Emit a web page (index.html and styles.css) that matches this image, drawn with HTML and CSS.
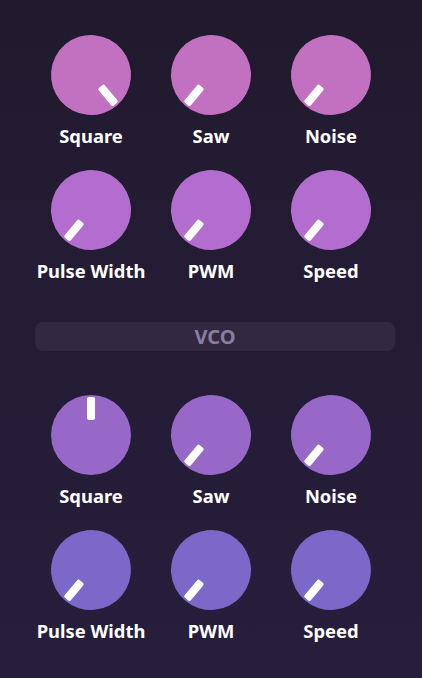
FILE: index.html
```html
<!DOCTYPE html>
<html lang="en">
<head>
    <meta charset="UTF-8">
    <meta name="viewport" content="width=device-width, initial-scale=1.0">
    <title>Synth Panel</title>
    <link rel="stylesheet" href="styles.css">
</head>
<body>
    <div class="panel">
        <!-- Oscillator mix -->
        <div class="knob-grid">
            <div class="control">
                <div class="knob row-1" style="transform: rotate(140deg)"><span class="pointer"></span></div>
                <div class="label">Square</div>
            </div>
            <div class="control">
                <div class="knob row-1" style="transform: rotate(-140deg)"><span class="pointer"></span></div>
                <div class="label">Saw</div>
            </div>
            <div class="control">
                <div class="knob row-1" style="transform: rotate(-140deg)"><span class="pointer"></span></div>
                <div class="label">Noise</div>
            </div>
            <div class="control">
                <div class="knob row-2" style="transform: rotate(-140deg)"><span class="pointer"></span></div>
                <div class="label">Pulse Width</div>
            </div>
            <div class="control">
                <div class="knob row-2" style="transform: rotate(-140deg)"><span class="pointer"></span></div>
                <div class="label">PWM</div>
            </div>
            <div class="control">
                <div class="knob row-2" style="transform: rotate(-140deg)"><span class="pointer"></span></div>
                <div class="label">Speed</div>
            </div>
        </div>

        <div class="section-title">VCO</div>

        <div class="knob-grid">
            <div class="control">
                <div class="knob row-3" style="transform: rotate(0deg)"><span class="pointer"></span></div>
                <div class="label">Square</div>
            </div>
            <div class="control">
                <div class="knob row-3" style="transform: rotate(-140deg)"><span class="pointer"></span></div>
                <div class="label">Saw</div>
            </div>
            <div class="control">
                <div class="knob row-3" style="transform: rotate(-140deg)"><span class="pointer"></span></div>
                <div class="label">Noise</div>
            </div>
            <div class="control">
                <div class="knob row-4" style="transform: rotate(-140deg)"><span class="pointer"></span></div>
                <div class="label">Pulse Width</div>
            </div>
            <div class="control">
                <div class="knob row-4" style="transform: rotate(-140deg)"><span class="pointer"></span></div>
                <div class="label">PWM</div>
            </div>
            <div class="control">
                <div class="knob row-4" style="transform: rotate(-140deg)"><span class="pointer"></span></div>
                <div class="label">Speed</div>
            </div>
        </div>
    </div>
</body>
</html>
```

FILE: styles.css
```css
html {
    background: #231b31;
}

body {
    font-family: 'Noto Sans', sans-serif;
    margin: 0;
    padding: 0;
    min-height: 678px;
    background: linear-gradient(180deg, #211a2e 0%, #271e3c 100%);
    color: #ffffff;
}

.panel {
    padding-top: 35px;
}

.knob-grid {
    display: grid;
    grid-template-columns: repeat(3, 120px);
    justify-content: center;
    row-gap: 22px;
}

.control {
    display: flex;
    flex-direction: column;
    align-items: center;
}

.knob {
    position: relative;
    width: 80px;
    height: 80px;
    border-radius: 50%;
}

.pointer {
    position: absolute;
    left: 36px;
    top: 2px;
    width: 8px;
    height: 23px;
    border-radius: 2px;
    background: #ffffff;
}

.row-1 {
    background: #c171c0;
}

.row-2 {
    background: #b36dcf;
}

.row-3 {
    background: #9868c9;
}

.row-4 {
    background: #7c68c9;
}

.label {
    margin-top: 9px;
    font-size: 18.4px;
    font-weight: 700;
    line-height: 24px;
}

.section-title {
    width: 360px;
    height: 29px;
    margin: 39px 0 44px 35px;
    border-radius: 8px;
    background: #322841;
    color: #8a7fa0;
    font-size: 20px;
    font-weight: 700;
    line-height: 29px;
    text-align: center;
}
```
